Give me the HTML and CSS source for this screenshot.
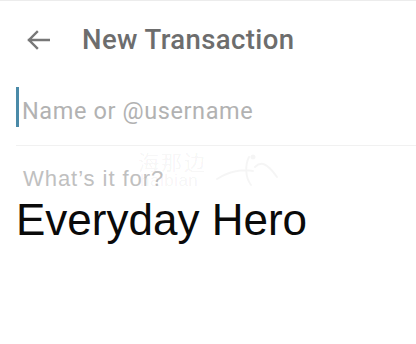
FILE: index.html
```html
<!DOCTYPE html>
<html>
<head>
<meta charset="utf-8">
<link rel="stylesheet" href="styles.css">
</head>
<body>
<div class="screen">
  <header class="topbar">
    <svg class="back" width="24" height="20" viewBox="0 0 24 20" aria-hidden="true">
      <path d="M23 10H3M11 2L3 10L11 18" fill="none" stroke="#777" stroke-width="2.4" stroke-linecap="square"/>
    </svg>
    <h1 class="title">New Transaction</h1>
  </header>
  <div class="recipient">
    <span class="cursor"></span>
    <span class="placeholder">Name or @username</span>
  </div>
  <div class="divider"></div>
  <div class="memo">
    <p class="memo-label">What’s it for?</p>
    <p class="memo-value">Everyday Hero</p>
    <div class="watermark">
      <div class="wm-text"><span class="wm-cn">海那边</span><span class="wm-en">haibian</span></div>
      <svg class="wm-logo" width="68" height="40" viewBox="0 0 68 40" aria-hidden="true">
        <path d="M2 26C14 18 28 16 38 18M40 14C46 8 52 10 62 24M34 4C30 12 30 24 36 32" fill="none" stroke="rgba(0,0,0,0.04)" stroke-width="2" stroke-linecap="round"/>
        <circle cx="38" cy="4" r="2.5" fill="rgba(0,0,0,0.04)"/>
      </svg>
    </div>
  </div>
</div>
</body>
</html>
```
FILE: styles.css
```css
html, body {
  margin: 0;
  padding: 0;
  background: #fff;
}
.screen {
  width: 416px;
  height: 344px;
  border-top: 1px solid #ececec;
  box-sizing: border-box;
  overflow: hidden;
  font-family: Roboto, "Liberation Sans", sans-serif;
}
.topbar {
  height: 77px;
  display: flex;
  align-items: center;
  padding-left: 26px;
}
.back {
  display: block;
}
.title {
  margin: 0 0 0 32px;
  font-size: 27.5px;
  font-weight: 500;
  letter-spacing: 0.4px;
  color: #6d6d6d;
  line-height: 30px;
}
.recipient {
  margin-top: 9px;
  display: flex;
  align-items: flex-start;
  padding-left: 16px;
  height: 40px;
}
.cursor {
  width: 3px;
  height: 40px;
  background: #4a8aa8;
  flex: none;
}
.placeholder {
  margin-left: 3px;
  font-size: 23.5px;
  letter-spacing: 0.6px;
  color: #b2b2b2;
  line-height: 26px;
  padding-top: 11px;
}
.divider {
  margin-top: 18px;
  margin-left: 16px;
  height: 1px;
  background: #f1f1f1;
}
.memo {
  position: relative;
  padding-left: 16px;
}
.memo-label {
  margin: 0;
  padding-top: 22px;
  padding-left: 7px;
  font-family: "Liberation Sans", Arial, sans-serif;
  font-size: 22px;
  letter-spacing: 0.95px;
  line-height: 22px;
  color: #c0c0c0;
}
.memo-value {
  margin: 0;
  padding-top: 5px;
  font-family: "Liberation Sans", Arial, sans-serif;
  font-size: 44px;
  line-height: 50px;
  color: #0a0a0a;
}
.watermark {
  position: absolute;
  left: 138px;
  top: 5px;
  display: flex;
  align-items: flex-start;
  gap: 8px;
}
.wm-text {
  display: flex;
  flex-direction: column;
  color: rgba(0,0,0,0.05);
  line-height: 1;
}
.wm-cn {
  font-family: "Noto Sans CJK SC", sans-serif;
  font-size: 21px;
  letter-spacing: 2px;
}
.wm-en {
  font-family: "Liberation Sans", sans-serif;
  font-size: 17px;
  letter-spacing: 0.5px;
  margin-left: 2px;
}
.wm-logo {
  display: block;
  margin-top: 2px;
}
```
